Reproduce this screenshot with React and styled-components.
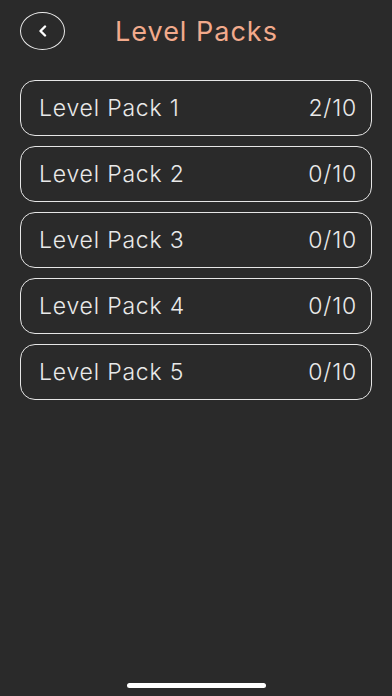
import React from 'react';
import styled, { createGlobalStyle } from 'styled-components';

const GlobalStyle = createGlobalStyle`
  html, body {
    margin: 0;
    padding: 0;
    background: #2a2a2a;
  }
  body {
    font-family: Inter, "Open Sans", "Liberation Sans", sans-serif;
  }
`;

const Screen = styled.div`
  width: 392px;
  height: 696px;
  background: #2a2a2a;
  display: flex;
  flex-direction: column;
  box-sizing: border-box;
  padding: 12px 20px 0;
`;

const Header = styled.div`
  display: flex;
  align-items: center;
  height: 38px;
`;

const BackButton = styled.button`
  width: 45px;
  height: 38px;
  border-radius: 50%;
  border: 1.5px solid #ececec;
  background: transparent;
  display: flex;
  align-items: center;
  justify-content: center;
  padding: 0;
  cursor: pointer;
`;

const Title = styled.h1`
  margin: 0 0 0 50px;
  font-size: 27px;
  font-weight: 400;
  color: #f2aa8c;
  letter-spacing: 1px;
`;

const List = styled.div`
  display: flex;
  flex-direction: column;
  gap: 10px;
  margin-top: 30px;
`;

const PackRow = styled.div`
  height: 56px;
  box-sizing: border-box;
  border: 1.5px solid #e6e6e6;
  border-radius: 15px;
  display: flex;
  align-items: center;
  justify-content: space-between;
  padding: 0 14px 0 18px;
  color: #e9e9e9;
  font-size: 23px;
  font-weight: 300;
  letter-spacing: 0.8px;
`;

const HomeBar = styled.div`
  margin: auto auto 8px;
  width: 139px;
  height: 5px;
  border-radius: 3px;
  background: #ffffff;
`;

const packs = [
  { name: 'Level Pack 1', done: 2 },
  { name: 'Level Pack 2', done: 0 },
  { name: 'Level Pack 3', done: 0 },
  { name: 'Level Pack 4', done: 0 },
  { name: 'Level Pack 5', done: 0 },
];

export default function App() {
  return (
    <>
      <GlobalStyle />
      <Screen>
        <Header>
          <BackButton aria-label="Back">
            <svg width="10" height="12" viewBox="0 0 10 12" fill="none">
              <path d="M7 1.5 L2.5 6 L7 10.5" stroke="#ffffff" strokeWidth="2.4" strokeLinecap="round" strokeLinejoin="round" />
            </svg>
          </BackButton>
          <Title>Level Packs</Title>
        </Header>
        <List>
          {packs.map(p => (
            <PackRow key={p.name}>
              <span>{p.name}</span>
              <span>{p.done}/10</span>
            </PackRow>
          ))}
        </List>
        <HomeBar />
      </Screen>
    </>
  );
}
